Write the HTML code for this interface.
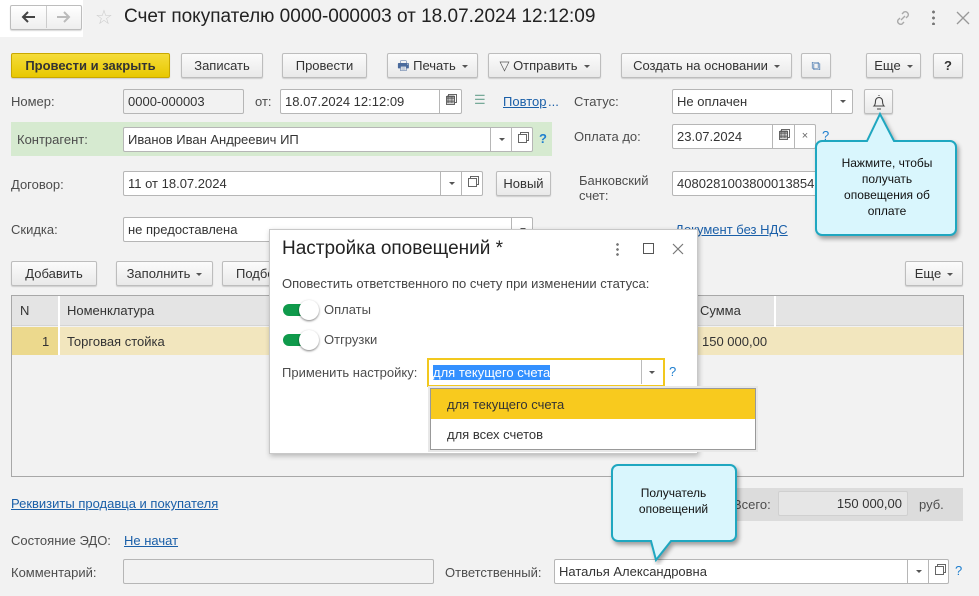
<!DOCTYPE html>
<html><head><meta charset="utf-8"><style>
*{box-sizing:border-box;margin:0;padding:0}
body{width:979px;height:596px;background:#f2f2f2;font-family:"Liberation Sans",Arial,sans-serif;font-size:13px;color:#333;position:relative;overflow:hidden}
.a{position:absolute;white-space:nowrap}
.btn{position:absolute;height:25px;border:1px solid #bdbdbd;border-radius:2px;background:linear-gradient(#fbfbfb,#e9e9e9);box-shadow:0 1px 1px rgba(0,0,0,.15);text-align:center;line-height:23px;color:#333}
.fld{position:absolute;height:25px;border:1px solid #b6b6b6;border-radius:2px;background:#fff;line-height:23px;padding-left:4px;color:#333}
.lbl{position:absolute;color:#4d4d4d;white-space:nowrap}
.dd{position:absolute;top:0;height:23px;border-left:1px solid #b6b6b6;width:22px}
.dd:after{content:"";position:absolute;left:8px;top:10px;border:3px solid transparent;border-top:3px solid #555}
.op{position:absolute;top:0;height:23px;border-left:1px solid #b6b6b6;width:22px}
.op:after{content:"";position:absolute;left:6px;top:6px;width:7px;height:7px;border:1px solid #666;box-shadow:2px -2px 0 -1px #fff,2px -2px 0 0 #666}
.link{color:#1a5fa8;text-decoration:underline}
.q{position:absolute;color:#1f7fcf;font-weight:bold}
.arr:after{content:"";display:inline-block;margin-left:6px;vertical-align:middle;border:3px solid transparent;border-top:3px solid #555;border-bottom:0}
</style></head><body>
<!-- nav -->
<div class="a" style="left:0;top:0;width:83px;height:37px;background:#fff"></div>
<div class="btn" style="left:10px;top:5px;width:72px;height:25px;background:linear-gradient(#fff,#eee)"></div>
<div class="a" style="left:46px;top:6px;width:1px;height:22px;background:#ccc"></div>
<svg class="a" style="left:20px;top:10px" width="16" height="14" viewBox="0 0 16 14" fill="none" stroke="#444" stroke-width="2"><path d="M15 7H3M8 2L3 7l5 5"/></svg>
<svg class="a" style="left:56px;top:10px" width="16" height="14" viewBox="0 0 16 14" fill="none" stroke="#bbb" stroke-width="2"><path d="M1 7h12M8 2l5 5-5 5"/></svg>
<div class="a" style="left:95px;top:5px;font-size:20px;color:#ccc">&#x2606;</div>
<div class="a" style="left:124px;top:6px;font-size:19px;color:#222">Счет покупателю 0000-000003 от 18.07.2024 12:12:09</div>
<svg class="a" style="left:893px;top:8px" width="20" height="20" viewBox="0 0 20 20" fill="none" stroke="#aaa" stroke-width="1.4"><path d="M8 12l4-4M9 6l2-2a3 3 0 0 1 4 4l-2 2M11 14l-2 2a3 3 0 0 1-4-4l2-2"/></svg>
<div class="a" style="left:932px;top:9px;width:3px;height:16px;background:radial-gradient(circle,#777 1.3px,transparent 1.6px) 0 0/3px 6px"></div>
<svg class="a" style="left:956px;top:11px" width="14" height="14" viewBox="0 0 14 14" stroke="#999" stroke-width="1.3"><path d="M1 1l12 12M13 1L1 13"/></svg>
<!-- toolbar -->
<div class="btn" style="left:11px;top:53px;width:159px;background:linear-gradient(#f5dc3a,#e8c800);border-color:#c9a800;font-weight:bold;color:#333">Провести и закрыть</div>
<div class="btn" style="left:181px;top:53px;width:82px">Записать</div>
<div class="btn" style="left:282px;top:53px;width:85px">Провести</div>
<div class="btn arr" style="left:387px;top:53px;width:91px"><span style="color:#4a6a9c">&#x1F5B6;</span> Печать</div>
<div class="btn arr" style="left:488px;top:53px;width:113px"><span style="color:#555">&#x25BD;</span> Отправить</div>
<div class="btn arr" style="left:621px;top:53px;width:171px">Создать на основании</div>
<div class="btn" style="left:801px;top:53px;width:30px;color:#4a7ab0">&#x29C9;</div>
<div class="btn arr" style="left:866px;top:53px;width:55px">Еще</div>
<div class="btn" style="left:933px;top:53px;width:30px;font-weight:bold">?</div>
<!-- row 2 -->
<div class="lbl" style="left:11px;top:94px">Номер:</div>
<div class="fld" style="left:123px;top:89px;width:121px;background:#f2f2f2">0000-000003</div>
<div class="lbl" style="left:255px;top:94px">от:</div>
<div class="fld" style="left:280px;top:89px;width:182px">18.07.2024 12:12:09<div class="op" style="left:158px;width:22px"></div></div>
<div class="a" style="left:446px;top:94px;font-size:10px;color:#555">&#x25A6;</div>
<div class="a" style="left:474px;top:92px;font-size:13px;color:#7a9">&#x2630;</div>
<div class="a link" style="left:503px;top:94px">Повтор</div><div class="a" style="left:548px;top:94px;color:#1a5fa8">...</div>
<div class="lbl" style="left:574px;top:94px">Статус:</div>
<div class="fld" style="left:672px;top:89px;width:181px">Не оплачен<div class="dd" style="left:158px"></div></div>
<div class="btn" style="left:864px;top:89px;width:29px;height:25px"></div>
<svg class="a" style="left:870px;top:93px" width="18" height="18" viewBox="0 0 18 18" fill="none" stroke="#444" stroke-width="1.1"><path d="M4 13c1.5-1.5 1.5-3 1.5-5a3.5 3.5 0 0 1 7 0c0 2 0 3.5 1.5 5z"/><path d="M9 3V2M7 16h4"/></svg>
<!-- row 3 -->
<div class="a" style="left:11px;top:122px;width:541px;height:34px;background:#d6ead0"></div>
<div class="lbl" style="left:17px;top:132px">Контрагент:</div>
<div class="fld" style="left:123px;top:127px;width:410px">Иванов Иван Андреевич ИП<div class="dd" style="left:366px"></div><div class="op" style="left:387px"></div></div>
<div class="q" style="left:539px;top:131px">?</div>
<div class="lbl" style="left:574px;top:129px">Оплата до:</div>
<div class="fld" style="left:672px;top:124px;width:144px">23.07.2024<div class="op" style="left:99px;width:22px"></div><div style="position:absolute;left:121px;top:0;height:23px;border-left:1px solid #b6b6b6;width:21px;text-align:center;color:#666;font-size:11px">×</div></div>
<div class="a" style="left:779px;top:129px;font-size:10px;color:#555">&#x25A6;</div>
<div class="q" style="left:822px;top:128px;font-weight:normal">?</div>
<!-- row 4 -->
<div class="lbl" style="left:11px;top:177px">Договор:</div>
<div class="fld" style="left:123px;top:171px;width:360px">11 от 18.07.2024<div class="dd" style="left:316px"></div><div class="op" style="left:337px"></div></div>
<div class="btn" style="left:496px;top:171px;width:55px">Новый</div>
<div class="lbl" style="left:579px;top:173px;line-height:15px">Банковский<br>счет:</div>
<div class="fld" style="left:672px;top:171px;width:180px;overflow:hidden">408028100380001385418</div>
<!-- row 5 -->
<div class="lbl" style="left:11px;top:222px">Скидка:</div>
<div class="fld" style="left:123px;top:217px;width:410px">не предоставлена<div class="dd" style="left:387px"></div></div>
<div class="a link" style="left:675px;top:222px">Документ без НДС</div>
<!-- buttons row -->
<div class="btn" style="left:11px;top:261px;width:86px">Добавить</div>
<div class="btn arr" style="left:116px;top:261px;width:97px">Заполнить</div>
<div class="btn" style="left:222px;top:261px;width:80px;text-align:left;padding-left:13px">Подбор</div>
<div class="btn arr" style="left:905px;top:261px;width:58px">Еще</div>
<!-- table -->
<div class="a" style="left:11px;top:295px;width:953px;height:182px;border:1px solid #a8a8a8;background:#f2f2f2"></div>
<div class="a" style="left:12px;top:296px;width:951px;height:30px;background:#e4e4e4;border-bottom:1px solid #d5d5d5"></div>
<div class="a" style="left:58px;top:296px;width:2px;height:59px;background:#fff"></div>
<div class="a" style="left:774px;top:296px;width:2px;height:59px;background:#fff"></div>
<div class="a" style="left:20px;top:303px;color:#333">N</div>
<div class="a" style="left:67px;top:303px;color:#333">Номенклатура</div>
<div class="a" style="left:700px;top:303px;color:#333">Сумма</div>
<div class="a" style="left:12px;top:327px;width:46px;height:28px;background:#ecd98d"></div>
<div class="a" style="left:60px;top:327px;width:903px;height:28px;background:#f2e6be"></div>
<div class="a" style="left:776px;top:327px;width:187px;height:28px;background:#f2e6be"></div>
<div class="a" style="left:42px;top:334px">1</div>
<div class="a" style="left:67px;top:334px">Торговая стойка</div>
<div class="a" style="left:702px;top:334px">150 000,00</div>
<!-- footer -->
<div class="a link" style="left:11px;top:496px">Реквизиты продавца и покупателя</div>
<div class="a" style="left:720px;top:488px;width:243px;height:33px;background:#dcdcdc"></div>
<div class="lbl" style="left:733px;top:497px">Всего:</div>
<div class="fld" style="left:778px;top:491px;width:130px;background:#e6e6e6;text-align:right;padding-right:5px;border-color:#d0d0d0">150 000,00</div>
<div class="lbl" style="left:919px;top:497px">руб.</div>
<div class="lbl" style="left:11px;top:533px">Состояние ЭДО:</div>
<div class="a link" style="left:124px;top:533px">Не начат</div>
<div class="lbl" style="left:11px;top:565px">Комментарий:</div>
<div class="fld" style="left:123px;top:559px;width:311px;background:#f2f2f2"></div>
<div class="lbl" style="left:445px;top:565px">Ответственный:</div>
<div class="fld" style="left:554px;top:559px;width:395px">Наталья Александровна<div class="dd" style="left:352px"></div><div class="op" style="left:373px"></div></div>
<div class="q" style="left:955px;top:563px;font-weight:normal">?</div>
<!-- dialog -->
<div class="a" style="left:269px;top:229px;width:429px;height:225px;background:#fff;border:1px solid #c8c8c8;box-shadow:1px 2px 5px rgba(0,0,0,.25)"></div>
<div class="a" style="left:282px;top:238px;font-size:19px;color:#222">Настройка оповещений *</div>
<div class="a" style="left:616px;top:242px;width:3px;height:14px;background:radial-gradient(circle,#777 1.2px,transparent 1.5px) 0 0/3px 5px"></div>
<div class="a" style="left:643px;top:243px;width:11px;height:11px;border:1.3px solid #555"></div>
<svg class="a" style="left:672px;top:243px" width="12" height="12" viewBox="0 0 12 12" stroke="#777" stroke-width="1.2"><path d="M1 1l10 10M11 1L1 11"/></svg>
<div class="lbl" style="left:282px;top:276px;color:#444">Оповестить ответственного по счету при изменении статуса:</div>
<div class="a" style="left:283px;top:304px;width:34px;height:12px;border-radius:6px;background:#0f9a4b"></div>
<div class="a" style="left:299px;top:300px;width:20px;height:20px;border-radius:50%;background:#fff;box-shadow:0 1px 2px rgba(0,0,0,.5)"></div>
<div class="lbl" style="left:324px;top:302px">Оплаты</div>
<div class="a" style="left:283px;top:334px;width:34px;height:12px;border-radius:6px;background:#0f9a4b"></div>
<div class="a" style="left:299px;top:330px;width:20px;height:20px;border-radius:50%;background:#fff;box-shadow:0 1px 2px rgba(0,0,0,.5)"></div>
<div class="lbl" style="left:324px;top:332px">Отгрузки</div>
<div class="lbl" style="left:282px;top:365px">Применить настройку:</div>
<div class="a" style="left:427px;top:358px;width:238px;height:29px;border:2px solid #f2c81e;background:#fff"></div>
<div class="a" style="left:433px;top:365px;background:#3390ff;color:#fff;line-height:15px">для текущего счета</div>
<div class="a" style="left:641px;top:360px;width:1px;height:24px;background:#bbb"></div>
<div class="a" style="left:649px;top:371px;border:3px solid transparent;border-top:3px solid #555"></div>
<div class="q" style="left:669px;top:364px;font-weight:normal">?</div>
<div class="a" style="left:428px;top:386px;width:330px;height:66px;background:#e8e8e8"></div>
<div class="a" style="left:430px;top:388px;width:326px;height:62px;background:#fff;border:1px solid #999"></div>
<div class="a" style="left:431px;top:389px;width:324px;height:30px;background:#f8ca1e"></div>
<div class="a" style="left:447px;top:397px;color:#333">для текущего счета</div>
<div class="a" style="left:447px;top:427px;color:#333">для всех счетов</div>
<!-- callout 1 -->
<svg class="a" style="left:810px;top:108px" width="160" height="135" viewBox="0 0 160 135"><path d="M12 33 H57 L70 6 L84 33 H140 a6 6 0 0 1 6 6 V121 a6 6 0 0 1 -6 6 H12 a6 6 0 0 1 -6 -6 V39 a6 6 0 0 1 6 -6z" fill="#d9f6fd" stroke="#1fa7c0" stroke-width="2" style="filter:drop-shadow(2px 3px 2px rgba(0,0,0,.35))"/></svg>
<div class="a" style="left:831px;top:155px;width:112px;text-align:center;font-size:12px;line-height:16px;color:#111;white-space:normal">Нажмите, чтобы получать оповещения об оплате</div>
<!-- callout 2 -->
<svg class="a" style="left:606px;top:460px" width="140" height="105" viewBox="0 0 140 105"><path d="M12 5 H124 a6 6 0 0 1 6 6 V75 a6 6 0 0 1 -6 6 H65 L50 100 L45 81 H12 a6 6 0 0 1 -6 -6 V11 a6 6 0 0 1 6 -6z" fill="#d9f6fd" stroke="#1fa7c0" stroke-width="2" style="filter:drop-shadow(2px 3px 2px rgba(0,0,0,.35))"/></svg>
<div class="a" style="left:612px;top:485px;width:123px;text-align:center;font-size:12px;line-height:16px;color:#111">Получатель<br>оповещений</div>
</body></html>
